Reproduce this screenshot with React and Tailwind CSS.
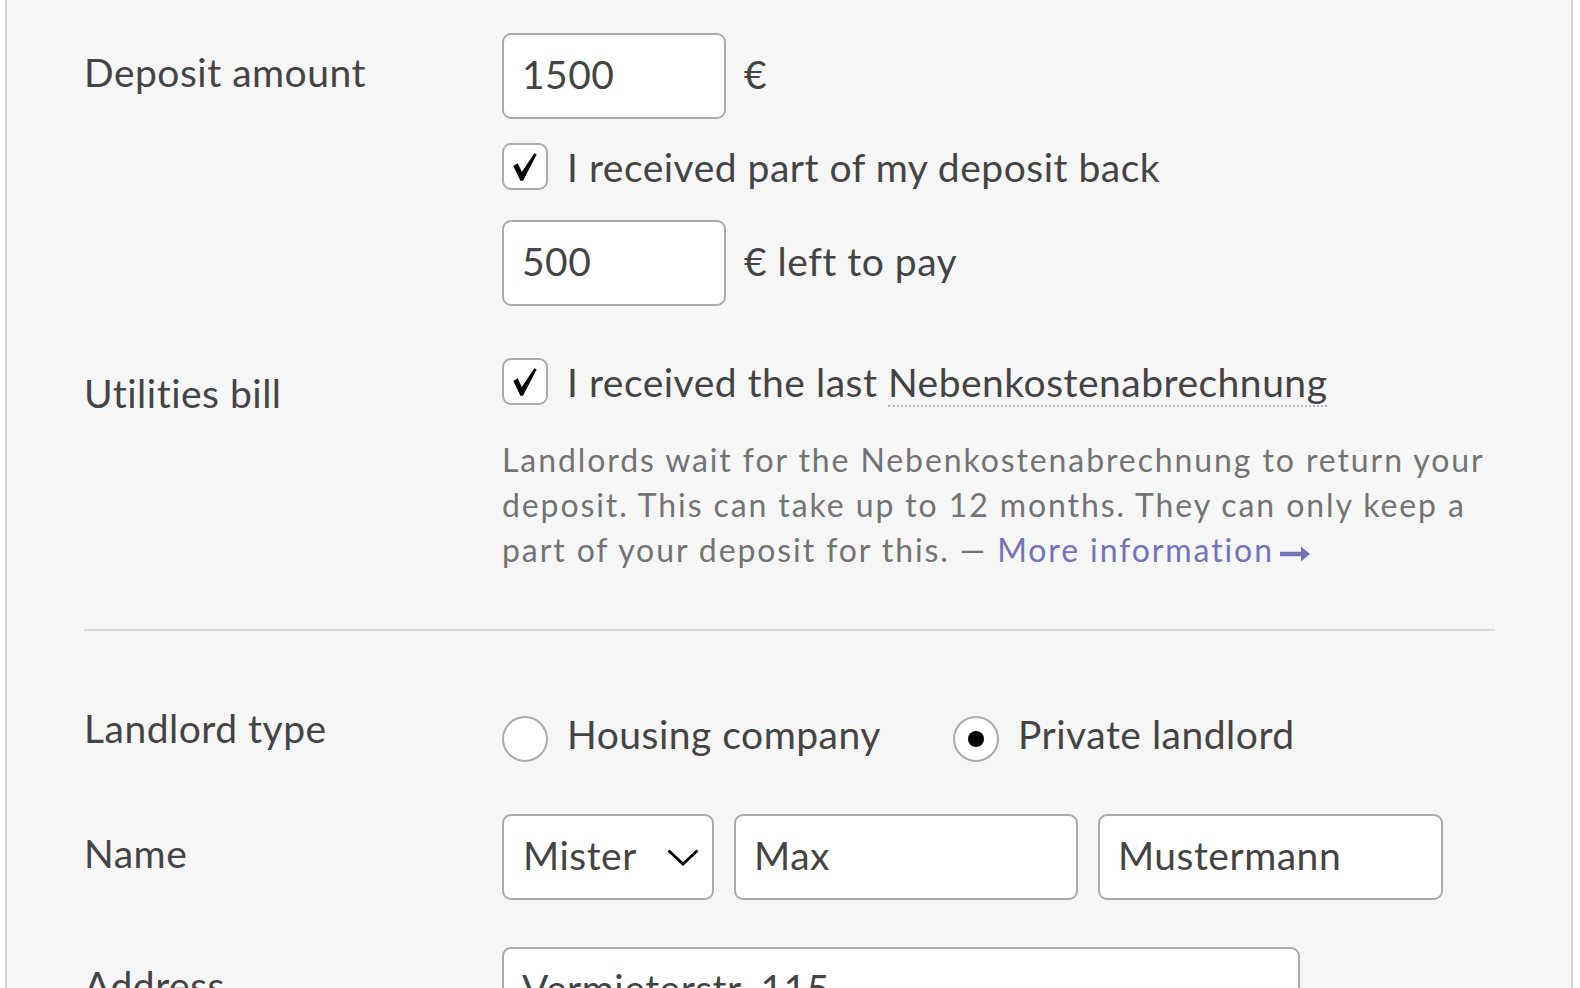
const font = { fontFamily: 'Lato, "Noto Sans", sans-serif' };

function Check() {
  return (
    <div className="w-[46px] h-[47px] shrink-0 rounded-[9px] border-2 border-[#ababab] bg-white flex items-center justify-center">
      <svg width="24" height="28" viewBox="0 0 24 28">
        <path d="M0.3 13 L4.8 10.3 L8.8 19 L21.4 0.2 L23.7 1.6 L10 27.8 L7.4 27.8 Z" fill="#000" />
      </svg>
    </div>
  );
}

function Radio({ on }) {
  return (
    <div className="w-[46px] h-[46px] shrink-0 rounded-full border-2 border-[#ababab] bg-white flex items-center justify-center">
      {on && <div className="w-[16px] h-[16px] rounded-full bg-black" />}
    </div>
  );
}

function Field({ value, className = '' }) {
  return (
    <div className={`h-[86px] rounded-[9px] border-2 border-[#ababab] bg-white pl-[18px] pr-[16px] pt-[16px] leading-[47px] text-[#444] ${className}`}>
      {value}
    </div>
  );
}

function Label({ children, className = '' }) {
  return <div className={`w-[418px] shrink-0 leading-[47px] text-[#444] ${className}`}>{children}</div>;
}

export default function App() {
  return (
    <div className="min-h-screen bg-white" style={font}>
      <div className="ml-[5px] w-[1568px] min-h-[988px] border-x-2 border-[#d2d2d2] bg-[#f6f6f6] pl-[77px] pt-[33px] text-[39px] tracking-[0.5px]">
        <div className="w-[1411px]">
          {/* deposit */}
          <div className="flex items-start">
            <Label className="mt-[16px]">Deposit amount</Label>
            <div className="flex flex-col">
              <div className="flex items-start">
                <Field value="1500" className="w-[224px]" />
                <span className="ml-[18px] mt-[18px] leading-[47px] text-[#444]">€</span>
              </div>
              <div className="flex items-start mt-[24px]">
                <Check />
                <span className="ml-[19px] mt-[1px] leading-[47px] text-[#444]">I received part of my deposit back</span>
              </div>
              <div className="flex items-start mt-[29px]">
                <Field value="500" className="w-[224px]" />
                <span className="ml-[18px] mt-[18px] leading-[47px] text-[#444]">€ left to pay</span>
              </div>
            </div>
          </div>

          {/* utilities */}
          <div className="flex items-start mt-[52px]">
            <Label className="mt-[12px]">Utilities bill</Label>
            <div className="flex flex-col">
              <div className="flex items-start">
                <Check />
                <span className="ml-[19px] mt-[1px] leading-[47px] text-[#444]">
                  I received the last{' '}
                  <span className="border-b-2 border-dotted border-[#b3b3b3]">Nebenkostenabrechnung</span>
                </span>
              </div>
              <p className="mt-[31px] text-[32px] leading-[45px] tracking-[1.9px] text-[#737373] whitespace-nowrap">
                Landlords wait for the Nebenkostenabrechnung to return your
                <br />
                deposit. This can take up to 12 months. They can only keep a
                <br />
                part of your deposit for this. —{' '}
                <a href="#" className="text-[#7373b9]">
                  More information
                  <svg className="inline-block ml-[6px] align-baseline" width="30" height="16" viewBox="0 0 30 16">
                    <path d="M0 5.8 H21 V0.5 L30 8 L21 15.5 V10.2 H0 Z" fill="#7373b9" />
                  </svg>
                </a>
              </p>
            </div>
          </div>

          <div className="mt-[57px] h-[2px] bg-[#d9d9d9]" />

          {/* landlord type */}
          <div className="flex items-start mt-[74px]">
            <Label>Landlord type</Label>
            <div className="flex items-start">
              <div className="w-[451px] flex items-start">
                <div className="mt-[11px]"><Radio /></div>
                <span className="ml-[19px] mt-[6px] leading-[47px] text-[#444]">Housing company</span>
              </div>
              <div className="flex items-start">
                <div className="mt-[11px]"><Radio on /></div>
                <span className="ml-[19px] mt-[6px] leading-[47px] text-[#444]">Private landlord</span>
              </div>
            </div>
          </div>

          {/* name */}
          <div className="flex items-start mt-[52px]">
            <Label className="mt-[16px]">Name</Label>
            <div className="flex items-start gap-[20px]">
              <div className="w-[212px] h-[86px] rounded-[9px] border-2 border-[#ababab] bg-white pl-[19px] pr-[13px] flex justify-between">
                <span className="pt-[16px] leading-[47px] text-[#444]">Mister</span>
                <svg className="self-center" width="32" height="17" viewBox="0 0 32 17">
                  <path d="M1.5 1.5 L16 15 L30.5 1.5" fill="none" stroke="#000" strokeWidth="2.8" />
                </svg>
              </div>
              <Field value="Max" className="w-[344px]" />
              <Field value="Mustermann" className="w-[345px]" />
            </div>
          </div>

          {/* address */}
          <div className="flex items-start mt-[47px]">
            <Label className="mt-[15px]">Address</Label>
            <Field value="Vermieterstr. 115" className="w-[798px]" />
          </div>
        </div>
      </div>
    </div>
  );
}
